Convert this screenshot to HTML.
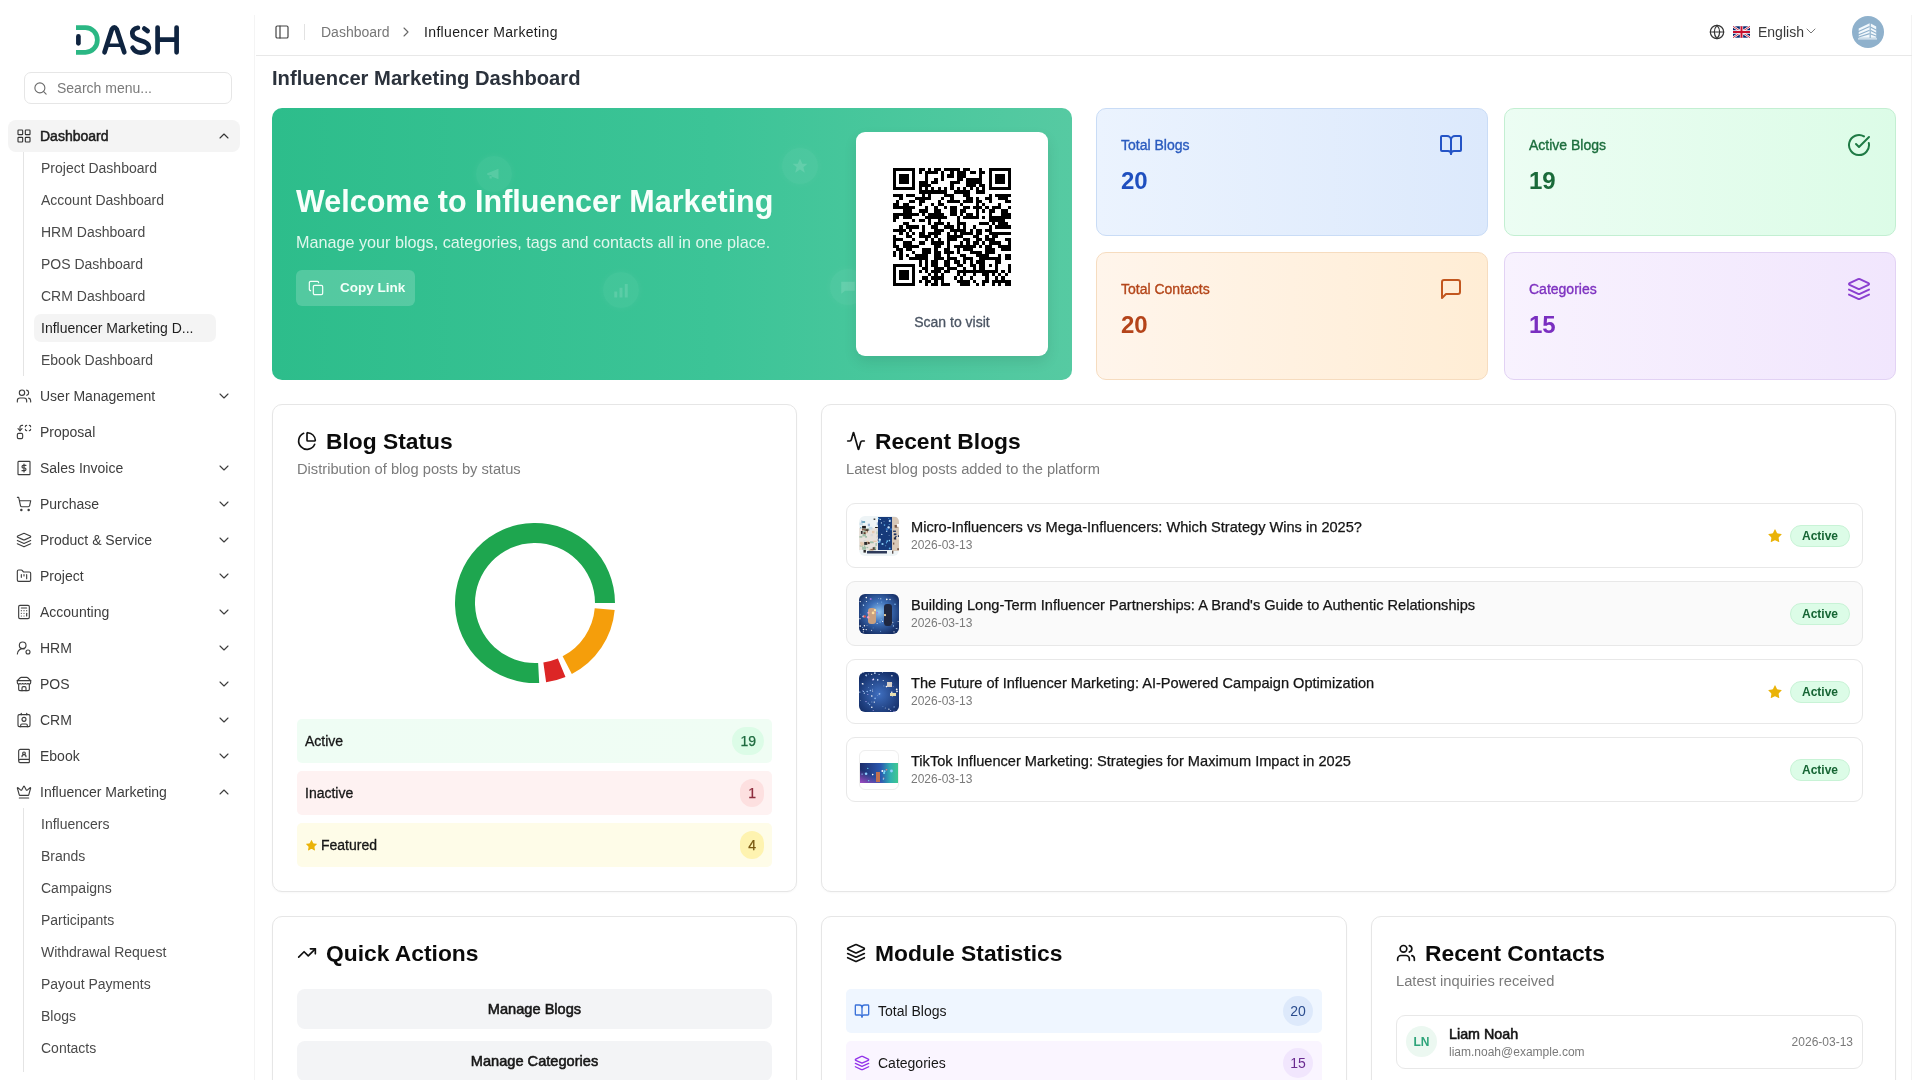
<!DOCTYPE html>
<html><head><meta charset="utf-8">
<style>
*{box-sizing:border-box;margin:0;padding:0}
html,body{width:1920px;height:1080px;overflow:hidden;background:#fff}
body{font-family:"Liberation Sans",sans-serif;color:#111;position:relative}
#root{position:absolute;left:0;top:0;width:1920px;height:1080px;background:#fff;will-change:transform;overflow:hidden}
.abs{position:absolute}
svg.i{fill:none;stroke:currentColor;stroke-width:2;stroke-linecap:round;stroke-linejoin:round;position:absolute}
/* sidebar */
#sb{position:absolute;left:0;top:0;width:256px;height:1080px;background:#fff}
.sbline{position:absolute;left:254px;top:15px;width:1px;height:1065px;background:#f4f4f4}
.search{position:absolute;left:24px;top:72px;width:208px;height:32px;border:1px solid #e6e6e6;border-radius:7px}
.search span{position:absolute;left:32px;top:0;line-height:30px;font-size:14px;color:#7a7a7a}
.nav{position:absolute;left:0;width:256px;height:32px;font-size:14px;color:#3d3d3d}
.nav .t{position:absolute;left:40px;top:0;line-height:32px;white-space:nowrap}
.nav svg.i{left:16px;top:8px;width:16px;height:16px;stroke-width:1.7}
.nav svg.ch{left:216px;top:8px;width:16px;height:16px;stroke-width:1.6}
.sub{position:absolute;left:0;width:256px;height:32px;font-size:14px;color:#4a4a4a}
.sub .t{position:absolute;left:41px;top:0;line-height:32px;white-space:nowrap}
.vline{position:absolute;left:23px;width:1px;background:#e4e4e4}
/* header */
#hd{position:absolute;left:256px;top:0;width:1656px;height:56px;border-bottom:1px solid #e8e8e8}
.mainline{position:absolute;left:1911px;top:15px;width:1px;height:1065px;background:#f3f3f3}
/* cards */
.card{position:absolute;border:1px solid #e6e6e6;border-radius:10px;background:#fff;box-shadow:0 1px 2px rgba(0,0,0,0.03)}
.ctitle{position:absolute;left:53px;font-size:22.8px;font-weight:700;color:#0b0b0b;white-space:nowrap;line-height:28px}
.csub{position:absolute;left:24px;font-size:14.7px;color:#7b7b7b;white-space:nowrap;line-height:18px}
.card svg.ci{left:24px;width:20px;height:20px;stroke-width:2;color:#111}
.stat{position:absolute;width:392px;height:128px;border-radius:10px;border:1px solid}
.stat .lb{position:absolute;left:24px;top:27px;font-size:14px;line-height:18px;white-space:nowrap;-webkit-text-stroke:0.35px currentColor}
.stat .num{position:absolute;left:24px;top:58px;font-size:24px;font-weight:700;line-height:28px}
.stat svg.i{left:342px;top:24px;width:24px;height:24px;stroke-width:2}
.srow{position:absolute;left:24px;width:475px;height:44px;border-radius:5px}
.srow .t{position:absolute;left:8px;top:0;line-height:44px;font-size:14px;color:#161616;-webkit-text-stroke:0.3px #161616}
.srow .b{position:absolute;right:8px;top:8px;padding:0 8px;height:28px;border-radius:14px;text-align:center;line-height:28px;font-size:14px;-webkit-text-stroke:0.25px currentColor}
.item{position:absolute;left:24px;width:1017px;height:65px;border:1px solid #e8e8e8;border-radius:9px;background:#fff}
.item .th{position:absolute;left:12px;top:12px;width:40px;height:40px;border-radius:6px;overflow:hidden}
.item .th svg{display:block}
.item .tt{position:absolute;left:64px;top:14px;font-size:14.6px;line-height:18px;color:#141414;white-space:nowrap;-webkit-text-stroke:0.25px #141414}
.item .dt{position:absolute;left:64px;top:33px;font-size:12px;line-height:16px;color:#7a7a7a}
.badge{position:absolute;right:12px;top:21px;width:60px;height:22px;border-radius:11px;background:#dcfce7;border:1px solid #c8f3d6;color:#166534;font-size:12px;font-weight:700;text-align:center;line-height:20px}
.star{position:absolute;right:79px;top:24px;width:16px;height:16px}
.qbtn{position:absolute;left:24px;width:475px;height:40px;border-radius:8px;background:#f3f4f6;text-align:center;line-height:40px;font-size:14.6px;color:#161616;-webkit-text-stroke:0.55px #161616}
.mrow{position:absolute;left:24px;width:476px;height:44px;border-radius:5px}
.mrow .t{position:absolute;left:32px;top:0;line-height:44px;font-size:14px;color:#161616}
.mrow svg.i{left:8px;top:14px;width:16px;height:16px;stroke-width:2}
.mrow .b{position:absolute;right:9px;top:7px;width:30px;height:30px;border-radius:15px;text-align:center;line-height:30px;font-size:14px}
</style></head>
<body>
<div id="root">
<!-- SIDEBAR -->
<div id="sb">
  <svg class="abs" style="left:0;top:0" width="256" height="70" viewBox="0 0 256 70">
    <g fill="none" stroke-linecap="round" stroke-linejoin="round" stroke-width="4.7">
      <path d="M76 27.6H85.5A11.85 12.35 0 0 1 97.35 39.95A11.85 12.35 0 0 1 85.5 52.3H76" stroke="#2bb784" stroke-linecap="butt"/>
      <path d="M78.4 36.4V43.3" stroke="#0f2440"/>
      <path d="M104.5 52.3L111.9 29.2Q114.3 25.6 116.7 29.2L124.3 52.3" stroke="#0f2440"/>
      <path d="M108.6 45.2H120.2" stroke="#0f2440" stroke-width="3.4"/>
      <path d="M137.9 27.8C134.2 28.4 132.3 30.6 132.3 33.6C132.3 37.4 135.5 39.2 140.5 40.6C145.5 42 148.9 43.5 148.9 47.2C148.9 50.8 145.5 52.6 140.8 52.6C136.8 52.6 134.2 50.6 132.6 47.8M144.3 28.6L147.6 31" stroke="#0f2440"/>
      <path d="M157.6 27.6V52.3M176.6 27.6V52.3M157.6 39.6H176.6" stroke="#0f2440"/>
    </g>
  </svg>
  <div class="search">
    <svg class="i" style="left:8px;top:8px;width:15px;height:15px;color:#6b6b6b;stroke-width:1.8" viewBox="0 0 24 24"><circle cx="11" cy="11" r="8"/><path d="m21 21-4.3-4.3"/></svg>
    <span>Search menu...</span>
  </div>
  <!-- Dashboard -->
  <div class="abs" style="left:8px;top:120px;width:232px;height:32px;background:#f4f4f4;border-radius:8px"></div>
  <div class="nav" style="top:120px">
    <svg class="i" viewBox="0 0 24 24" style="color:#333"><rect width="7" height="7" x="3" y="3" rx="1"/><rect width="7" height="7" x="14" y="3" rx="1"/><rect width="7" height="7" x="14" y="14" rx="1"/><rect width="7" height="7" x="3" y="14" rx="1"/></svg>
    <span class="t" style="color:#1d1d1d;-webkit-text-stroke:0.5px #1d1d1d">Dashboard</span>
    <svg class="i ch" viewBox="0 0 24 24" style="color:#333"><path d="m18 15-6-6-6 6"/></svg>
  </div>
  <div class="vline" style="top:152px;height:224px"></div>
  <div class="sub" style="top:152px"><span class="t">Project Dashboard</span></div>
  <div class="sub" style="top:184px"><span class="t">Account Dashboard</span></div>
  <div class="sub" style="top:216px"><span class="t">HRM Dashboard</span></div>
  <div class="sub" style="top:248px"><span class="t">POS Dashboard</span></div>
  <div class="sub" style="top:280px"><span class="t">CRM Dashboard</span></div>
  <div class="abs" style="left:34px;top:314px;width:182px;height:28px;background:#f4f4f4;border-radius:7px"></div>
  <div class="sub" style="top:312px"><span class="t" style="color:#1f1f1f">Influencer Marketing D...</span></div>
  <div class="sub" style="top:344px"><span class="t">Ebook Dashboard</span></div>

  <div class="nav" style="top:380px"><svg class="i" viewBox="0 0 24 24"><path d="M16 21v-2a4 4 0 0 0-4-4H6a4 4 0 0 0-4 4v2"/><circle cx="9" cy="7" r="4"/><path d="M22 21v-2a4 4 0 0 0-3-3.87"/><path d="M16 3.13a4 4 0 0 1 0 7.75"/></svg><span class="t">User Management</span><svg class="i ch" viewBox="0 0 24 24"><path d="m6 9 6 6 6-6"/></svg></div>
  <div class="nav" style="top:416px"><svg class="i" viewBox="0 0 24 24"><path d="M14 4a2 2 0 0 1 2-2"/><path d="M16 10a2 2 0 0 1-2-2"/><path d="M20 2a2 2 0 0 1 2 2"/><path d="M22 8a2 2 0 0 1-2 2"/><path d="m3 7 3 3 3-3"/><path d="M6 10V5a3 3 0 0 1 3-3h1"/><rect x="2" y="14" width="8" height="8" rx="2"/></svg><span class="t">Proposal</span></div>
  <div class="nav" style="top:452px"><svg class="i" viewBox="0 0 24 24"><rect x="3" y="2" width="18" height="20" rx="1"/><path d="M15 8h-4a2 2 0 0 0 0 4h2a2 2 0 0 1 0 4H9"/><path d="M12 6v12"/></svg><span class="t">Sales Invoice</span><svg class="i ch" viewBox="0 0 24 24"><path d="m6 9 6 6 6-6"/></svg></div>
  <div class="nav" style="top:488px"><svg class="i" viewBox="0 0 24 24"><circle cx="8" cy="21" r="1"/><circle cx="19" cy="21" r="1"/><path d="M2.05 2.05h2l2.66 12.42a2 2 0 0 0 2 1.58h9.78a2 2 0 0 0 1.95-1.57l1.65-7.43H5.12"/></svg><span class="t">Purchase</span><svg class="i ch" viewBox="0 0 24 24"><path d="m6 9 6 6 6-6"/></svg></div>
  <div class="nav" style="top:524px"><svg class="i" viewBox="0 0 24 24"><path d="m12.83 2.18a2 2 0 0 0-1.66 0L2.6 6.08a1 1 0 0 0 0 1.83l8.58 3.91a2 2 0 0 0 1.66 0l8.58-3.9a1 1 0 0 0 0-1.83Z"/><path d="m22 17.65-9.17 4.16a2 2 0 0 1-1.66 0L2 17.65"/><path d="m22 12.65-9.17 4.16a2 2 0 0 1-1.66 0L2 12.65"/></svg><span class="t">Product &amp; Service</span><svg class="i ch" viewBox="0 0 24 24"><path d="m6 9 6 6 6-6"/></svg></div>
  <div class="nav" style="top:560px"><svg class="i" viewBox="0 0 24 24"><path d="M4 20h16a2 2 0 0 0 2-2V8a2 2 0 0 0-2-2h-7.93a2 2 0 0 1-1.66-.9l-.82-1.2A2 2 0 0 0 7.93 3H4a2 2 0 0 0-2 2v13c0 1.1.9 2 2 2Z"/><path d="M8 10v4"/><path d="M12 10v2"/><path d="M16 10v6"/></svg><span class="t">Project</span><svg class="i ch" viewBox="0 0 24 24"><path d="m6 9 6 6 6-6"/></svg></div>
  <div class="nav" style="top:596px"><svg class="i" viewBox="0 0 24 24"><rect width="16" height="20" x="4" y="2" rx="2"/><path d="M8 6h8"/><path d="M16 14v4"/><path d="M16 10h.01"/><path d="M12 10h.01"/><path d="M8 10h.01"/><path d="M12 14h.01"/><path d="M8 14h.01"/><path d="M12 18h.01"/><path d="M8 18h.01"/></svg><span class="t">Accounting</span><svg class="i ch" viewBox="0 0 24 24"><path d="m6 9 6 6 6-6"/></svg></div>
  <div class="nav" style="top:632px"><svg class="i" viewBox="0 0 24 24"><path d="M2 21a8 8 0 0 1 10.43-7.62"/><circle cx="10" cy="8" r="5"/><circle cx="18" cy="18" r="3"/></svg><span class="t">HRM</span><svg class="i ch" viewBox="0 0 24 24"><path d="m6 9 6 6 6-6"/></svg></div>
  <div class="nav" style="top:668px"><svg class="i" viewBox="0 0 24 24"><path d="m2 7 4.41-4.41A2 2 0 0 1 7.83 2h8.34a2 2 0 0 1 1.42.59L22 7"/><path d="M4 12v8a2 2 0 0 0 2 2h12a2 2 0 0 0 2-2v-8"/><path d="M15 22v-4a2 2 0 0 0-2-2h-2a2 2 0 0 0-2 2v4"/><path d="M2 7h20"/><path d="M22 7v3a2 2 0 0 1-2 2a2.7 2.7 0 0 1-1.59-.63.7.7 0 0 0-.82 0A2.7 2.7 0 0 1 16 12a2.7 2.7 0 0 1-1.59-.63.7.7 0 0 0-.82 0A2.7 2.7 0 0 1 12 12a2.7 2.7 0 0 1-1.59-.63.7.7 0 0 0-.82 0A2.7 2.7 0 0 1 8 12a2.7 2.7 0 0 1-1.59-.63.7.7 0 0 0-.82 0A2.7 2.7 0 0 1 4 12a2 2 0 0 1-2-2V7"/></svg><span class="t">POS</span><svg class="i ch" viewBox="0 0 24 24"><path d="m6 9 6 6 6-6"/></svg></div>
  <div class="nav" style="top:704px"><svg class="i" viewBox="0 0 24 24"><path d="M16 2v2"/><path d="M7 22v-2a2 2 0 0 1 2-2h6a2 2 0 0 1 2 2v2"/><path d="M8 2v2"/><circle cx="12" cy="11" r="3"/><rect x="3" y="4" width="18" height="18" rx="2"/></svg><span class="t">CRM</span><svg class="i ch" viewBox="0 0 24 24"><path d="m6 9 6 6 6-6"/></svg></div>
  <div class="nav" style="top:740px"><svg class="i" viewBox="0 0 24 24"><path d="M15 13a3 3 0 1 0-6 0"/><path d="M4 19.5v-15A2.5 2.5 0 0 1 6.5 2H19a1 1 0 0 1 1 1v18a1 1 0 0 1-1 1H6.5a1 1 0 0 1 0-5H20"/><circle cx="12" cy="8" r="2"/></svg><span class="t">Ebook</span><svg class="i ch" viewBox="0 0 24 24"><path d="m6 9 6 6 6-6"/></svg></div>
  <div class="nav" style="top:776px"><svg class="i" viewBox="0 0 24 24"><path d="M11.562 3.266a.5.5 0 0 1 .876 0L15.39 8.87a1 1 0 0 0 1.516.294L21.183 5.5a.5.5 0 0 1 .798.519l-2.834 10.246a1 1 0 0 1-.956.734H5.81a1 1 0 0 1-.957-.734L2.02 6.02a.5.5 0 0 1 .798-.519l4.276 3.664a1 1 0 0 0 1.516-.294z"/><path d="M5 21h14"/></svg><span class="t">Influencer Marketing</span><svg class="i ch" viewBox="0 0 24 24"><path d="m18 15-6-6-6 6"/></svg></div>
  <div class="vline" style="top:808px;height:264px"></div>
  <div class="sub" style="top:808px"><span class="t">Influencers</span></div>
  <div class="sub" style="top:840px"><span class="t">Brands</span></div>
  <div class="sub" style="top:872px"><span class="t">Campaigns</span></div>
  <div class="sub" style="top:904px"><span class="t">Participants</span></div>
  <div class="sub" style="top:936px"><span class="t">Withdrawal Request</span></div>
  <div class="sub" style="top:968px"><span class="t">Payout Payments</span></div>
  <div class="sub" style="top:1000px"><span class="t">Blogs</span></div>
  <div class="sub" style="top:1032px"><span class="t">Contacts</span></div>
</div>
<div class="sbline"></div>
<div class="mainline"></div>

<!-- HEADER -->
<div id="hd">
  <svg class="i" viewBox="0 0 24 24" style="left:18px;top:24px;width:16px;height:16px;color:#444;stroke-width:1.8"><rect width="18" height="18" x="3" y="3" rx="2"/><path d="M9 3v18"/></svg>
  <div class="abs" style="left:48px;top:24px;width:1px;height:16px;background:#e2e2e2"></div>
  <span class="abs" style="left:65px;top:23px;font-size:14px;line-height:18px;color:#777">Dashboard</span>
  <svg class="i" viewBox="0 0 24 24" style="left:142px;top:24px;width:16px;height:16px;color:#666;stroke-width:1.6"><path d="m9 18 6-6-6-6"/></svg>
  <span class="abs" style="left:168px;top:23px;font-size:14px;line-height:18px;color:#1c1c1c;letter-spacing:0.35px">Influencer Marketing</span>

  <svg class="i" viewBox="0 0 24 24" style="left:1453px;top:24px;width:16px;height:16px;color:#333;stroke-width:1.8"><circle cx="12" cy="12" r="10"/><path d="M12 2a14.5 14.5 0 0 0 0 20 14.5 14.5 0 0 0 0-20"/><path d="M2 12h20"/></svg>
  <svg class="abs" style="left:1477px;top:26px" width="17" height="12" viewBox="0 0 60 40">
    <rect width="60" height="40" fill="#012169"/>
    <path d="M0 0L60 40M60 0L0 40" stroke="#fff" stroke-width="8"/>
    <path d="M0 0L60 40M60 0L0 40" stroke="#C8102E" stroke-width="3"/>
    <path d="M30 0V40M0 20H60" stroke="#fff" stroke-width="12"/>
    <path d="M30 0V40M0 20H60" stroke="#C8102E" stroke-width="7"/>
  </svg>
  <span class="abs" style="left:1502px;top:23px;font-size:14px;line-height:18px;color:#3a3a3a">English</span>
  <svg class="i" viewBox="0 0 24 24" style="left:1547px;top:23px;width:16px;height:16px;color:#777;stroke-width:1.5"><path d="m6 9 6 6 6-6"/></svg>
  <div class="abs" style="left:1596px;top:16px;width:32px;height:32px;border-radius:16px;background:#8fb1cc;overflow:hidden">
    <svg class="abs" style="left:0;top:0" width="32" height="32" viewBox="0 0 32 32"><g fill="#f2f8fc"><path d="M6.7 12.6L17.6 7.2V21.8H6.7z"/><path d="M18.8 7.4L24.2 10.6V21.8H18.8z"/><rect x="6" y="22.4" width="19" height="1"/></g><g stroke="#8fb1cc" stroke-width="1.1" fill="none"><path d="M6 15.8L17.6 10.6M6 18.9L17.6 14.2M6 21.2L17.6 17.6M18.8 11.2L24.6 14.2M18.8 14.6L24.6 17.4M18.8 18L24.6 20.2"/></g></svg>
  </div>
</div>

<!-- PAGE TITLE -->
<div class="abs" style="left:272px;top:66px;font-size:20.2px;font-weight:700;line-height:24px;color:#2b323c;white-space:nowrap">Influencer Marketing Dashboard</div>

<!-- BANNER -->
<div class="abs" style="left:272px;top:108px;width:800px;height:272px;border-radius:10px;background:linear-gradient(90deg,#2dbd8b 0%,#3cc497 55%,#56caa2 100%);overflow:hidden">
  <div class="abs" style="left:204px;top:48px;width:36px;height:36px;border-radius:18px;background:rgba(255,255,255,0.05);box-shadow:0 0 8px rgba(255,255,255,0.05)"><svg class="abs" style="left:9px;top:9px" width="18" height="18" viewBox="0 0 24 24"><path d="M3 11l15-6v14l-15-6z M6 13v5h3v-4" fill="rgba(255,255,255,0.13)"/></svg></div>
  <div class="abs" style="left:510px;top:40px;width:36px;height:36px;border-radius:18px;background:rgba(255,255,255,0.05);box-shadow:0 0 8px rgba(255,255,255,0.05)"><svg class="abs" style="left:9px;top:9px" width="18" height="18" viewBox="0 0 24 24"><path d="M12 2l3 7h7l-5.5 4.5 2 7.5-6.5-4.5-6.5 4.5 2-7.5L2 9h7z" fill="rgba(255,255,255,0.13)"/></svg></div>
  <div class="abs" style="left:331px;top:164px;width:36px;height:36px;border-radius:18px;background:rgba(255,255,255,0.05);box-shadow:0 0 8px rgba(255,255,255,0.05)"><svg class="abs" style="left:9px;top:9px" width="18" height="18" viewBox="0 0 24 24"><path d="M3 14h4v8H3zM10 9h4v13h-4zM17 4h4v18h-4z" fill="rgba(255,255,255,0.13)"/></svg></div>
  <div class="abs" style="left:558px;top:161px;width:36px;height:36px;border-radius:18px;background:rgba(255,255,255,0.05);box-shadow:0 0 8px rgba(255,255,255,0.05)"><svg class="abs" style="left:9px;top:9px" width="18" height="18" viewBox="0 0 24 24"><path d="M3 5h18v12H8l-5 4z" fill="rgba(255,255,255,0.13)"/></svg></div>
  <div class="abs" style="left:24px;top:75px;font-size:30.5px;font-weight:700;line-height:36px;color:#f7fffb;white-space:nowrap">Welcome to Influencer Marketing</div>
  <div class="abs" style="left:24px;top:124px;font-size:16.2px;line-height:20px;color:#e0f7ed;white-space:nowrap">Manage your blogs, categories, tags and contacts all in one place.</div>
  <div class="abs" style="left:24px;top:162px;width:119px;height:36px;border-radius:6px;background:rgba(255,255,255,0.18)">
    <svg class="i" viewBox="0 0 24 24" style="left:12px;top:10px;width:16px;height:16px;color:#f3fff9;stroke-width:1.8"><rect width="14" height="14" x="8" y="8" rx="2"/><path d="M4 16c-1.1 0-2-.9-2-2V4c0-1.1.9-2 2-2h10c1.1 0 2 .9 2 2"/></svg>
    <span class="abs" style="left:44px;top:9px;font-size:13.5px;font-weight:700;line-height:18px;color:#f3fff9">Copy Link</span>
  </div>
  <div class="abs" style="left:584px;top:24px;width:192px;height:224px;border-radius:9px;background:#fff;box-shadow:0 6px 14px rgba(0,0,0,0.09)">
    <svg class="abs" style="left:37px;top:36px" width="118" height="118" viewBox="0 0 37 37" shape-rendering="crispEdges"><path d="M0 0h7v1h-7zM8 0h2v1h-2zM11 0h1v1h-1zM13 0h2v1h-2zM16 0h5v1h-5zM22 0h2v1h-2zM27 0h1v1h-1zM30 0h7v1h-7zM0 1h1v1h-1zM6 1h1v1h-1zM8 1h1v1h-1zM10 1h4v1h-4zM15 1h1v1h-1zM18 1h1v1h-1zM20 1h3v1h-3zM24 1h2v1h-2zM27 1h2v1h-2zM30 1h1v1h-1zM36 1h1v1h-1zM0 2h1v1h-1zM2 2h3v1h-3zM6 2h1v1h-1zM10 2h1v1h-1zM15 2h1v1h-1zM17 2h2v1h-2zM20 2h3v1h-3zM27 2h1v1h-1zM30 2h1v1h-1zM32 2h3v1h-3zM36 2h1v1h-1zM0 3h1v1h-1zM2 3h3v1h-3zM6 3h1v1h-1zM10 3h1v1h-1zM13 3h1v1h-1zM15 3h1v1h-1zM20 3h2v1h-2zM23 3h5v1h-5zM30 3h1v1h-1zM32 3h3v1h-3zM36 3h1v1h-1zM0 4h1v1h-1zM2 4h3v1h-3zM6 4h1v1h-1zM8 4h3v1h-3zM12 4h2v1h-2zM18 4h3v1h-3zM23 4h5v1h-5zM30 4h1v1h-1zM32 4h3v1h-3zM36 4h1v1h-1zM0 5h1v1h-1zM6 5h1v1h-1zM8 5h4v1h-4zM18 5h1v1h-1zM23 5h3v1h-3zM27 5h2v1h-2zM30 5h1v1h-1zM36 5h1v1h-1zM0 6h7v1h-7zM8 6h1v1h-1zM10 6h1v1h-1zM12 6h1v1h-1zM14 6h1v1h-1zM16 6h1v1h-1zM18 6h1v1h-1zM20 6h1v1h-1zM22 6h1v1h-1zM24 6h1v1h-1zM26 6h1v1h-1zM28 6h1v1h-1zM30 6h7v1h-7zM8 7h9v1h-9zM19 7h5v1h-5zM26 7h3v1h-3zM0 8h3v1h-3zM4 8h3v1h-3zM9 8h1v1h-1zM11 8h1v1h-1zM16 8h3v1h-3zM22 8h2v1h-2zM30 8h1v1h-1zM32 8h5v1h-5zM2 9h1v1h-1zM7 9h5v1h-5zM15 9h1v1h-1zM18 9h1v1h-1zM23 9h2v1h-2zM26 9h1v1h-1zM29 9h2v1h-2zM33 9h3v1h-3zM1 10h1v1h-1zM5 10h2v1h-2zM8 10h2v1h-2zM14 10h1v1h-1zM17 10h4v1h-4zM22 10h3v1h-3zM26 10h2v1h-2zM30 10h1v1h-1zM35 10h2v1h-2zM0 11h2v1h-2zM3 11h2v1h-2zM8 11h1v1h-1zM12 11h1v1h-1zM14 11h2v1h-2zM21 11h1v1h-1zM26 11h1v1h-1zM28 11h1v1h-1zM33 11h1v1h-1zM0 12h7v1h-7zM10 12h1v1h-1zM13 12h1v1h-1zM16 12h1v1h-1zM18 12h2v1h-2zM22 12h2v1h-2zM25 12h3v1h-3zM29 12h1v1h-1zM31 12h3v1h-3zM36 12h1v1h-1zM3 13h3v1h-3zM8 13h3v1h-3zM13 13h2v1h-2zM18 13h2v1h-2zM21 13h2v1h-2zM26 13h1v1h-1zM28 13h1v1h-1zM30 13h2v1h-2zM34 13h2v1h-2zM0 14h8v1h-8zM9 14h1v1h-1zM11 14h5v1h-5zM18 14h2v1h-2zM21 14h1v1h-1zM23 14h2v1h-2zM26 14h1v1h-1zM30 14h1v1h-1zM34 14h3v1h-3zM0 15h2v1h-2zM3 15h3v1h-3zM10 15h7v1h-7zM20 15h1v1h-1zM22 15h5v1h-5zM28 15h1v1h-1zM30 15h7v1h-7zM0 16h1v1h-1zM6 16h1v1h-1zM8 16h2v1h-2zM11 16h1v1h-1zM14 16h1v1h-1zM20 16h1v1h-1zM30 16h5v1h-5zM3 17h2v1h-2zM11 17h1v1h-1zM13 17h3v1h-3zM17 17h1v1h-1zM20 17h3v1h-3zM27 17h3v1h-3zM31 17h1v1h-1zM33 17h3v1h-3zM2 18h1v1h-1zM4 18h4v1h-4zM9 18h1v1h-1zM12 18h2v1h-2zM16 18h3v1h-3zM20 18h1v1h-1zM22 18h1v1h-1zM25 18h1v1h-1zM30 18h1v1h-1zM32 18h5v1h-5zM0 19h4v1h-4zM5 19h1v1h-1zM9 19h1v1h-1zM13 19h3v1h-3zM18 19h5v1h-5zM24 19h1v1h-1zM26 19h2v1h-2zM29 19h2v1h-2zM2 20h1v1h-1zM4 20h1v1h-1zM6 20h1v1h-1zM8 20h2v1h-2zM11 20h4v1h-4zM17 20h1v1h-1zM19 20h1v1h-1zM21 20h4v1h-4zM26 20h2v1h-2zM30 20h7v1h-7zM0 21h1v1h-1zM4 21h2v1h-2zM8 21h4v1h-4zM13 21h1v1h-1zM17 21h5v1h-5zM25 21h2v1h-2zM29 21h1v1h-1zM31 21h2v1h-2zM0 22h3v1h-3zM6 22h1v1h-1zM10 22h1v1h-1zM12 22h1v1h-1zM14 22h1v1h-1zM17 22h3v1h-3zM22 22h2v1h-2zM26 22h2v1h-2zM29 22h3v1h-3zM35 22h2v1h-2zM0 23h1v1h-1zM3 23h3v1h-3zM8 23h2v1h-2zM12 23h4v1h-4zM17 23h1v1h-1zM21 23h1v1h-1zM23 23h1v1h-1zM25 23h2v1h-2zM28 23h1v1h-1zM30 23h4v1h-4zM36 23h1v1h-1zM0 24h2v1h-2zM3 24h5v1h-5zM13 24h2v1h-2zM17 24h1v1h-1zM19 24h7v1h-7zM27 24h1v1h-1zM29 24h2v1h-2zM33 24h4v1h-4zM1 25h2v1h-2zM4 25h2v1h-2zM9 25h3v1h-3zM13 25h1v1h-1zM16 25h2v1h-2zM20 25h1v1h-1zM22 25h3v1h-3zM29 25h3v1h-3zM34 25h3v1h-3zM0 26h1v1h-1zM2 26h1v1h-1zM6 26h1v1h-1zM9 26h3v1h-3zM13 26h2v1h-2zM16 26h3v1h-3zM20 26h1v1h-1zM24 26h4v1h-4zM29 26h3v1h-3zM0 27h1v1h-1zM2 27h1v1h-1zM4 27h1v1h-1zM7 27h4v1h-4zM13 27h2v1h-2zM17 27h1v1h-1zM21 27h2v1h-2zM26 27h4v1h-4zM33 27h1v1h-1zM35 27h2v1h-2zM2 28h1v1h-1zM5 28h6v1h-6zM13 28h3v1h-3zM17 28h3v1h-3zM22 28h3v1h-3zM27 28h7v1h-7zM35 28h2v1h-2zM8 29h1v1h-1zM10 29h1v1h-1zM12 29h2v1h-2zM16 29h2v1h-2zM19 29h2v1h-2zM22 29h1v1h-1zM24 29h1v1h-1zM26 29h3v1h-3zM32 29h2v1h-2zM0 30h7v1h-7zM8 30h1v1h-1zM10 30h1v1h-1zM12 30h2v1h-2zM16 30h2v1h-2zM20 30h2v1h-2zM24 30h2v1h-2zM27 30h2v1h-2zM30 30h1v1h-1zM32 30h1v1h-1zM36 30h1v1h-1zM0 31h1v1h-1zM6 31h1v1h-1zM9 31h2v1h-2zM13 31h3v1h-3zM17 31h3v1h-3zM22 31h1v1h-1zM25 31h1v1h-1zM27 31h2v1h-2zM32 31h1v1h-1zM36 31h1v1h-1zM0 32h1v1h-1zM2 32h3v1h-3zM6 32h1v1h-1zM8 32h1v1h-1zM10 32h1v1h-1zM12 32h3v1h-3zM16 32h2v1h-2zM20 32h13v1h-13zM34 32h1v1h-1zM36 32h1v1h-1zM0 33h1v1h-1zM2 33h3v1h-3zM6 33h1v1h-1zM11 33h1v1h-1zM13 33h1v1h-1zM15 33h1v1h-1zM20 33h1v1h-1zM22 33h1v1h-1zM25 33h1v1h-1zM28 33h2v1h-2zM31 33h1v1h-1zM33 33h1v1h-1zM35 33h1v1h-1zM0 34h1v1h-1zM2 34h3v1h-3zM6 34h1v1h-1zM9 34h2v1h-2zM12 34h4v1h-4zM19 34h1v1h-1zM21 34h1v1h-1zM24 34h1v1h-1zM29 34h1v1h-1zM32 34h1v1h-1zM34 34h1v1h-1zM0 35h1v1h-1zM6 35h1v1h-1zM8 35h1v1h-1zM10 35h2v1h-2zM13 35h1v1h-1zM15 35h1v1h-1zM20 35h4v1h-4zM25 35h1v1h-1zM28 35h2v1h-2zM31 35h6v1h-6zM0 36h7v1h-7zM10 36h1v1h-1zM12 36h2v1h-2zM15 36h3v1h-3zM21 36h3v1h-3zM26 36h1v1h-1zM28 36h1v1h-1zM31 36h1v1h-1zM33 36h1v1h-1zM35 36h2v1h-2z" fill="#000"/></svg>
    <div class="abs" style="left:0;top:181px;width:192px;text-align:center;font-size:14px;line-height:18px;color:#4b5563;-webkit-text-stroke:0.3px #4b5563">Scan to visit</div>
  </div>
</div>

<!-- STAT CARDS -->
<div class="stat" style="left:1096px;top:108px;background:linear-gradient(90deg,#ebf3fe,#dce9fc);border-color:#c9dcf6">
  <span class="lb" style="color:#2a5bbf">Total Blogs</span><span class="num" style="color:#1f4fbf">20</span>
  <svg class="i" viewBox="0 0 24 24" style="color:#2454c6"><path d="M12 7v14"/><path d="M3 18a1 1 0 0 1-1-1V4a1 1 0 0 1 1-1h5a4 4 0 0 1 4 4 4 4 0 0 1 4-4h5a1 1 0 0 1 1 1v13a1 1 0 0 1-1 1h-6a3 3 0 0 0-3 3 3 3 0 0 0-3-3z"/></svg>
</div>
<div class="stat" style="left:1504px;top:108px;background:linear-gradient(90deg,#ecfdf3,#dcfce7);border-color:#c3efd2">
  <span class="lb" style="color:#1c6e3d">Active Blogs</span><span class="num" style="color:#1a6b3a">19</span>
  <svg class="i" viewBox="0 0 24 24" style="color:#1f7a45"><path d="M21.801 10A10 10 0 1 1 17 3.335"/><path d="m9 11 3 3L22 4"/></svg>
</div>
<div class="stat" style="left:1096px;top:252px;background:linear-gradient(90deg,#fff5eb,#ffedd5);border-color:#f6dcbf">
  <span class="lb" style="color:#b4461a">Total Contacts</span><span class="num" style="color:#b4441a">20</span>
  <svg class="i" viewBox="0 0 24 24" style="color:#c2571f"><path d="M21 15a2 2 0 0 1-2 2H7l-4 4V5a2 2 0 0 1 2-2h14a2 2 0 0 1 2 2z"/></svg>
</div>
<div class="stat" style="left:1504px;top:252px;background:linear-gradient(90deg,#f8f2fe,#f1e6fd);border-color:#e2d2f4">
  <span class="lb" style="color:#7e32c0">Categories</span><span class="num" style="color:#7a2fc0">15</span>
  <svg class="i" viewBox="0 0 24 24" style="color:#8b3fd0"><path d="m12.83 2.18a2 2 0 0 0-1.66 0L2.6 6.08a1 1 0 0 0 0 1.83l8.58 3.91a2 2 0 0 0 1.66 0l8.58-3.9a1 1 0 0 0 0-1.83Z"/><path d="m22 17.65-9.17 4.16a2 2 0 0 1-1.66 0L2 17.65"/><path d="m22 12.65-9.17 4.16a2 2 0 0 1-1.66 0L2 12.65"/></svg>
</div>

<!-- BLOG STATUS -->
<div class="card" style="left:272px;top:404px;width:525px;height:488px">
  <svg class="i ci" viewBox="0 0 24 24" style="top:26px"><path d="M21 12c.552 0 1.005-.449.95-.998a10 10 0 0 0-8.953-8.951c-.55-.055-.998.398-.998.95v8a1 1 0 0 0 1 1z"/><path d="M21.21 15.89A10 10 0 1 1 8 2.83"/></svg>
  <div class="ctitle" style="top:22px">Blog Status</div>
  <div class="csub" style="top:55px">Distribution of blog posts by status</div>
  <svg class="abs" style="left:181px;top:117px" width="162" height="162" viewBox="-81 -81 162 162" ><path d="M4.19 79.89A80 80 0 1 1 80.00 -0.00L60.00 -0.00A60 60 0 1 0 3.14 59.92Z" fill="#1ea64f"/><path d="M30.49 73.96A80 80 0 0 1 11.13 79.22L8.35 59.42A60 60 0 0 0 22.86 55.47Z" fill="#dc2626"/><path d="M79.68 7.11A80 80 0 0 1 36.82 71.03L27.61 53.27A60 60 0 0 0 59.76 5.33Z" fill="#f59e0b"/></svg>
  <div class="srow" style="top:314px;background:linear-gradient(90deg,#effdf4,#f0fdf4)"><span class="t">Active</span><span class="b" style="background:#dcfce7;color:#1d6b3f">19</span></div>
  <div class="srow" style="top:366px;background:#fef2f2"><span class="t">Inactive</span><span class="b" style="background:#fde0e0;color:#8f2f3f">1</span></div>
  <div class="srow" style="top:418px;background:#fefce8"><svg class="abs" style="left:8px;top:16px" width="13" height="13" viewBox="0 0 24 24"><path fill="#eab308" d="M11.525 2.295a.53.53 0 0 1 .95 0l2.31 4.679a2.123 2.123 0 0 0 1.595 1.16l5.166.756a.53.53 0 0 1 .294.904l-3.736 3.638a2.123 2.123 0 0 0-.611 1.878l.882 5.14a.53.53 0 0 1-.771.56l-4.618-2.428a2.122 2.122 0 0 0-1.973 0L6.396 21.01a.53.53 0 0 1-.77-.56l.881-5.139a2.122 2.122 0 0 0-.611-1.879L2.16 9.795a.53.53 0 0 1 .294-.906l5.165-.755a2.122 2.122 0 0 0 1.597-1.16z"/></svg><span class="t" style="left:24px">Featured</span><span class="b" style="background:#fef3b0;color:#7a5a12">4</span></div>
</div>

<!-- RECENT BLOGS -->
<div class="card" style="left:821px;top:404px;width:1075px;height:488px">
  <svg class="i ci" viewBox="0 0 24 24" style="top:26px"><path d="M22 12h-2.48a2 2 0 0 0-1.93 1.46l-2.35 8.36a.25.25 0 0 1-.48 0L9.24 2.18a.25.25 0 0 0-.48 0l-2.35 8.36A2 2 0 0 1 4.49 12H2"/></svg>
  <div class="ctitle" style="top:22px">Recent Blogs</div>
  <div class="csub" style="top:55px">Latest blog posts added to the platform</div>
  <div class="item" style="top:98px">
    <div class="th"><svg width="40" height="40" viewBox="0 0 40 40"><rect width="40" height="40" fill="#eef4f6"/><rect x="0" y="12" width="20" height="22" fill="#e8e2dc"/><rect x="4.5" y="24.0" width="2.1" height="2.2" fill="#d9d9d9"/><rect x="11.0" y="25.3" width="3.7" height="1.9" fill="#9fbfa8"/><rect x="4.5" y="33.9" width="2.4" height="2.7" fill="#2b2b2b"/><rect x="7.5" y="30.9" width="1.7" height="1.3" fill="#9fbfa8"/><rect x="7.4" y="12.3" width="3.3" height="1.3" fill="#9fbfa8"/><rect x="0.8" y="29.2" width="3.5" height="1.5" fill="#9fbfa8"/><rect x="13.7" y="31.3" width="3.1" height="2.8" fill="#2b2b2b"/><rect x="13.8" y="24.7" width="3.9" height="1.3" fill="#e4c9b0"/><rect x="1.9" y="15.0" width="1.7" height="2.9" fill="#2b2b2b"/><rect x="14.8" y="30.8" width="2.3" height="2.7" fill="#9fbfa8"/><rect x="6.7" y="24.9" width="2.8" height="2.8" fill="#d9d9d9"/><rect x="17.4" y="12.6" width="1.8" height="2.2" fill="#d9d9d9"/><rect x="3.1" y="30.9" width="3.9" height="2.8" fill="#9fbfa8"/><rect x="2.0" y="26.4" width="2.9" height="3.0" fill="#e4c9b0"/><rect x="5.4" y="13.4" width="3.6" height="3.0" fill="#5a3d2e"/><rect x="6.5" y="13.5" width="3.7" height="1.0" fill="#2b2b2b"/><rect x="14.6" y="31.2" width="1.1" height="2.2" fill="#5a3d2e"/><rect x="7.2" y="24.9" width="2.7" height="2.8" fill="#e4c9b0"/><rect x="9.6" y="34.0" width="1.9" height="1.2" fill="#9fbfa8"/><rect x="10.2" y="32.9" width="3.9" height="1.6" fill="#e4c9b0"/><rect x="3.0" y="12.9" width="3.6" height="1.6" fill="#8a6a55"/><rect x="17.0" y="20.3" width="2.4" height="2.0" fill="#d9d9d9"/><rect x="16.5" y="27.0" width="1.3" height="2.9" fill="#9fbfa8"/><rect x="5.2" y="26.0" width="3.1" height="2.9" fill="#2b2b2b"/><rect x="18.6" y="23.5" width="2.6" height="1.0" fill="#2b2b2b"/><rect x="18.8" y="18.9" width="2.1" height="2.2" fill="#8a6a55"/><rect x="1.1" y="25.8" width="2.4" height="2.4" fill="#e4c9b0"/><rect x="11.6" y="18.1" width="2.5" height="2.2" fill="#d9d9d9"/><rect x="0.4" y="20.1" width="2.9" height="1.6" fill="#9fbfa8"/><rect x="6.1" y="20.0" width="1.9" height="1.7" fill="#9fbfa8"/><rect x="5.0" y="29.3" width="1.3" height="2.6" fill="#9fbfa8"/><rect x="13.0" y="14.9" width="2.5" height="2.3" fill="#e4c9b0"/><rect x="4.5" y="16.1" width="2.3" height="2.4" fill="#5a3d2e"/><rect x="11.4" y="32.9" width="3.0" height="1.4" fill="#8a6a55"/><rect x="1.5" y="28.3" width="1.7" height="2.1" fill="#e4c9b0"/><rect x="4.3" y="14.7" width="2.6" height="1.4" fill="#9fbfa8"/><rect x="3.5" y="18.1" width="3.4" height="2.3" fill="#9fbfa8"/><rect x="6.6" y="14.9" width="1.9" height="2.6" fill="#e4c9b0"/><rect x="8.8" y="26.0" width="1.9" height="2.1" fill="#5a3d2e"/><rect x="17.5" y="15.4" width="1.0" height="2.9" fill="#9fbfa8"/><rect x="17.8" y="6.3" width="3.9" height="2.9" fill="#9ab6d6"/><rect x="0.6" y="6.6" width="3.3" height="2.5" fill="#c6dce8"/><rect x="9.8" y="10.9" width="3.6" height="2.7" fill="#c6dce8"/><rect x="2.2" y="4.4" width="1.1" height="2.6" fill="#9ab6d6"/><rect x="16.1" y="11.0" width="2.7" height="1.0" fill="#1d1d1d"/><rect x="3.1" y="5.0" width="3.0" height="2.0" fill="#6fa8c0"/><rect x="1.0" y="11.1" width="1.3" height="1.3" fill="#6fa8c0"/><rect x="14.6" y="2.6" width="1.7" height="1.2" fill="#1d1d1d"/><rect x="3.1" y="9.9" width="3.8" height="2.6" fill="#1d1d1d"/><rect x="8.8" y="7.7" width="2.2" height="2.5" fill="#9ab6d6"/><rect x="19" y="1" width="14" height="33" fill="#163a7a"/><circle cx="22.8" cy="18.4" r="0.7" fill="#cfe9ff"/><circle cx="23.5" cy="28.0" r="1.1" fill="#8fd0f5"/><circle cx="19.6" cy="2.6" r="0.8" fill="#5fb0e8"/><circle cx="31.0" cy="3.8" r="0.8" fill="#2d6fc0"/><circle cx="21.2" cy="3.4" r="0.7" fill="#cfe9ff"/><circle cx="27.2" cy="12.9" r="0.6" fill="#2d6fc0"/><circle cx="25.0" cy="5.2" r="0.4" fill="#cfe9ff"/><circle cx="30.1" cy="19.7" r="0.4" fill="#cfe9ff"/><circle cx="27.5" cy="26.8" r="0.7" fill="#5fb0e8"/><circle cx="27.7" cy="15.2" r="0.7" fill="#cfe9ff"/><circle cx="29.6" cy="11.4" r="1.2" fill="#cfe9ff"/><circle cx="25.5" cy="9.1" r="0.8" fill="#5fb0e8"/><circle cx="30.2" cy="8.4" r="0.5" fill="#5fb0e8"/><circle cx="32.1" cy="13.3" r="1.1" fill="#2d6fc0"/><circle cx="20.7" cy="23.8" r="1.2" fill="#cfe9ff"/><circle cx="28.3" cy="25.2" r="0.9" fill="#5fb0e8"/><circle cx="30.4" cy="24.6" r="0.8" fill="#8fd0f5"/><circle cx="29.8" cy="2.5" r="0.5" fill="#5fb0e8"/><circle cx="28.2" cy="13.4" r="1.1" fill="#2d6fc0"/><circle cx="30.8" cy="5.0" r="1.1" fill="#cfe9ff"/><circle cx="30.7" cy="32.4" r="0.9" fill="#5fb0e8"/><circle cx="19.5" cy="26.3" r="0.8" fill="#8fd0f5"/><circle cx="20.5" cy="25.7" r="1.1" fill="#5fb0e8"/><circle cx="26.7" cy="29.7" r="0.5" fill="#5fb0e8"/><circle cx="22.4" cy="6.9" r="0.6" fill="#cfe9ff"/><rect x="33" y="1" width="7" height="34" fill="#d8c8b8"/><rect x="34.8" y="21.4" width="2.9" height="2.1" fill="#3b2a22"/><rect x="35.6" y="9.0" width="2.9" height="2.7" fill="#7a5a48"/><rect x="35.9" y="20.3" width="2.2" height="2.8" fill="#1c2f5c"/><rect x="34.1" y="14.6" width="2.8" height="1.3" fill="#1c2f5c"/><rect x="38.2" y="32.2" width="2.0" height="1.9" fill="#7a5a48"/><rect x="34.0" y="26.6" width="1.3" height="2.0" fill="#7a5a48"/><rect x="39.0" y="19.3" width="2.6" height="2.3" fill="#1c2f5c"/><rect x="37.2" y="20.9" width="3.0" height="2.8" fill="#f0e0d0"/><rect x="33.2" y="17.3" width="1.8" height="1.3" fill="#f0e0d0"/><rect x="34.7" y="17.4" width="2.7" height="1.8" fill="#1c2f5c"/><rect x="37.9" y="8.0" width="2.2" height="2.8" fill="#ffffff"/><rect x="33.2" y="34.8" width="1.1" height="2.9" fill="#3b2a22"/><rect x="8" y="35" width="20" height="2.5" fill="#2e3a5a"/></svg></div>
    <span class="tt">Micro-Influencers vs Mega-Influencers: Which Strategy Wins in 2025?</span><span class="dt">2026-03-13</span>
    <svg class="star" viewBox="0 0 24 24"><path fill="#eab308" d="M11.525 2.295a.53.53 0 0 1 .95 0l2.31 4.679a2.123 2.123 0 0 0 1.595 1.16l5.166.756a.53.53 0 0 1 .294.904l-3.736 3.638a2.123 2.123 0 0 0-.611 1.878l.882 5.14a.53.53 0 0 1-.771.56l-4.618-2.428a2.122 2.122 0 0 0-1.973 0L6.396 21.01a.53.53 0 0 1-.77-.56l.881-5.139a2.122 2.122 0 0 0-.611-1.879L2.16 9.795a.53.53 0 0 1 .294-.906l5.165-.755a2.122 2.122 0 0 0 1.597-1.16z"/></svg>
    <span class="badge">Active</span>
  </div>
  <div class="item" style="top:176px;background:#fafafa">
    <div class="th"><svg width="40" height="40" viewBox="0 0 40 40"><defs><radialGradient id="g2" cx="50%" cy="45%" r="60%"><stop offset="0" stop-color="#8ec3f0"/><stop offset=".45" stop-color="#3d6fb8"/><stop offset="1" stop-color="#162f66"/></radialGradient></defs><rect width="40" height="40" fill="url(#g2)"/><circle cx="18.7" cy="9.2" r="0.4" fill="#ffffff"/><circle cx="38.3" cy="34.2" r="0.4" fill="#bfe0ff"/><circle cx="31.0" cy="5.5" r="0.7" fill="#ffffff"/><circle cx="36.0" cy="10.2" r="0.8" fill="#7fb8f0"/><circle cx="7.3" cy="3.6" r="0.8" fill="#ffffff"/><circle cx="3.7" cy="33.4" r="0.5" fill="#7fb8f0"/><circle cx="18.1" cy="29.4" r="0.5" fill="#ffffff"/><circle cx="13.4" cy="17.4" r="0.6" fill="#bfe0ff"/><circle cx="25.8" cy="29.7" r="0.6" fill="#bfe0ff"/><circle cx="21.8" cy="4.8" r="0.5" fill="#ffffff"/><circle cx="4.5" cy="35.5" r="0.8" fill="#ffffff"/><circle cx="21.1" cy="28.0" r="0.7" fill="#7fb8f0"/><circle cx="30.3" cy="11.8" r="0.7" fill="#7fb8f0"/><circle cx="4.3" cy="37.8" r="0.5" fill="#ffffff"/><circle cx="26.7" cy="20.3" r="0.3" fill="#7fb8f0"/><circle cx="27.1" cy="22.7" r="0.4" fill="#bfe0ff"/><circle cx="7.2" cy="35.6" r="0.7" fill="#ffffff"/><circle cx="4.3" cy="22.4" r="0.9" fill="#ffffff"/><circle cx="22.2" cy="25.9" r="0.6" fill="#7fb8f0"/><circle cx="31.3" cy="28.2" r="0.4" fill="#bfe0ff"/><circle cx="30.2" cy="21.7" r="0.7" fill="#7fb8f0"/><circle cx="4.0" cy="10.8" r="0.3" fill="#bfe0ff"/><circle cx="1.7" cy="20.2" r="0.4" fill="#7fb8f0"/><circle cx="35.0" cy="37.8" r="0.6" fill="#ffffff"/><circle cx="14.1" cy="33.9" r="0.4" fill="#7fb8f0"/><circle cx="23.6" cy="27.3" r="0.6" fill="#ffffff"/><circle cx="7.4" cy="7.6" r="0.5" fill="#ffffff"/><circle cx="32.6" cy="29.9" r="0.7" fill="#bfe0ff"/><circle cx="34.4" cy="31.9" r="0.6" fill="#bfe0ff"/><circle cx="22.7" cy="8.1" r="0.5" fill="#7fb8f0"/><circle cx="1.2" cy="32.1" r="0.8" fill="#ffffff"/><circle cx="12.6" cy="36.2" r="0.5" fill="#ffffff"/><circle cx="39.1" cy="27.5" r="0.5" fill="#ffffff"/><circle cx="1.2" cy="7.6" r="0.7" fill="#ffffff"/><circle cx="30.8" cy="26.5" r="0.6" fill="#ffffff"/><circle cx="8.0" cy="31.3" r="0.4" fill="#ffffff"/><circle cx="4.5" cy="11.3" r="0.7" fill="#bfe0ff"/><circle cx="5.4" cy="31.7" r="0.7" fill="#ffffff"/><circle cx="1.0" cy="24.7" r="0.6" fill="#ffffff"/><circle cx="21.6" cy="37.2" r="0.5" fill="#7fb8f0"/><circle cx="27.8" cy="5.4" r="0.8" fill="#ffffff"/><circle cx="28.6" cy="29.6" r="0.5" fill="#bfe0ff"/><circle cx="37.3" cy="34.5" r="0.6" fill="#bfe0ff"/><circle cx="19.4" cy="4.4" r="0.3" fill="#ffffff"/><circle cx="33.8" cy="28.2" r="0.5" fill="#ffffff"/><rect x="9" y="14" width="8" height="16" rx="3" fill="#c9a080"/><rect x="25" y="10" width="8" height="22" rx="3" fill="#1f2740"/><circle cx="26.0" cy="21.1" r="1.1" fill="#ffe0a0"/><circle cx="14.1" cy="18.9" r="1.4" fill="#ffe0a0"/><circle cx="18.2" cy="18.7" r="0.8" fill="#a070e0"/><circle cx="16.0" cy="16.1" r="1.2" fill="#ffe0a0"/><circle cx="11.7" cy="5.1" r="1.0" fill="#a070e0"/><circle cx="9.3" cy="18.8" r="1.0" fill="#f0a0c0"/><circle cx="5.7" cy="22.5" r="1.2" fill="#e05050"/><circle cx="9.2" cy="23.3" r="1.2" fill="#f0a0c0"/></svg></div>
    <span class="tt">Building Long-Term Influencer Partnerships: A Brand's Guide to Authentic Relationships</span><span class="dt">2026-03-13</span>
    <span class="badge">Active</span>
  </div>
  <div class="item" style="top:254px">
    <div class="th"><svg width="40" height="40" viewBox="0 0 40 40"><defs><radialGradient id="g3" cx="50%" cy="55%" r="60%"><stop offset="0" stop-color="#3f6fc0"/><stop offset="1" stop-color="#15306a"/></radialGradient></defs><rect width="40" height="40" fill="url(#g3)"/><circle cx="2.4" cy="0.9" r="0.6" fill="#ffffff"/><circle cx="1.3" cy="28.6" r="0.4" fill="#ffffff"/><circle cx="15.9" cy="1.1" r="0.9" fill="#d0e4ff"/><circle cx="9.7" cy="15.6" r="0.4" fill="#8fbaf0"/><circle cx="24.9" cy="13.9" r="0.4" fill="#ffffff"/><circle cx="32.3" cy="11.6" r="0.9" fill="#ffffff"/><circle cx="31.6" cy="38.5" r="0.6" fill="#b0a0f0"/><circle cx="10.6" cy="32.6" r="0.7" fill="#8fbaf0"/><circle cx="12.7" cy="2.3" r="0.6" fill="#ffffff"/><circle cx="23.7" cy="0.1" r="0.3" fill="#ffffff"/><circle cx="0.8" cy="20.1" r="0.6" fill="#d0e4ff"/><circle cx="26.2" cy="36.0" r="0.4" fill="#ffffff"/><circle cx="13.6" cy="19.1" r="0.5" fill="#ffffff"/><circle cx="15.3" cy="30.1" r="0.7" fill="#ffffff"/><circle cx="3.5" cy="11.7" r="0.8" fill="#ffffff"/><circle cx="20.3" cy="21.9" r="0.6" fill="#ffffff"/><circle cx="7.0" cy="29.6" r="0.7" fill="#b0a0f0"/><circle cx="14.4" cy="7.4" r="0.8" fill="#ffffff"/><circle cx="9.2" cy="31.2" r="0.6" fill="#8fbaf0"/><circle cx="32.8" cy="20.3" r="0.8" fill="#ffffff"/><circle cx="38.0" cy="1.7" r="0.4" fill="#ffffff"/><circle cx="32.9" cy="3.7" r="0.7" fill="#ffffff"/><circle cx="12.8" cy="24.0" r="0.8" fill="#ffffff"/><circle cx="35.1" cy="34.9" r="0.6" fill="#8fbaf0"/><circle cx="39.9" cy="0.1" r="0.4" fill="#ffffff"/><circle cx="13.5" cy="12.5" r="0.6" fill="#d0e4ff"/><circle cx="9.6" cy="2.0" r="0.4" fill="#d0e4ff"/><circle cx="23.4" cy="0.5" r="0.4" fill="#d0e4ff"/><circle cx="8.8" cy="22.5" r="0.6" fill="#b0a0f0"/><circle cx="12.8" cy="35.3" r="0.8" fill="#ffffff"/><circle cx="7.1" cy="3.2" r="0.8" fill="#ffffff"/><circle cx="23.9" cy="34.4" r="0.4" fill="#8fbaf0"/><circle cx="3.4" cy="18.6" r="0.4" fill="#b0a0f0"/><circle cx="4.4" cy="19.4" r="0.7" fill="#8fbaf0"/><circle cx="16.1" cy="26.4" r="0.8" fill="#8fbaf0"/><circle cx="33.4" cy="23.8" r="0.8" fill="#d0e4ff"/><circle cx="4.7" cy="0.3" r="0.5" fill="#ffffff"/><circle cx="13.7" cy="7.7" r="0.8" fill="#b0a0f0"/><circle cx="27.5" cy="14.6" r="0.8" fill="#ffffff"/><circle cx="24.2" cy="8.6" r="0.5" fill="#ffffff"/><circle cx="13.4" cy="17.2" r="0.4" fill="#d0e4ff"/><circle cx="12.9" cy="30.0" r="0.4" fill="#d0e4ff"/><circle cx="35.0" cy="39.5" r="0.7" fill="#b0a0f0"/><circle cx="34.1" cy="14.7" r="0.4" fill="#b0a0f0"/><circle cx="38.0" cy="19.4" r="0.8" fill="#ffffff"/><circle cx="18.8" cy="23.5" r="0.3" fill="#ffffff"/><circle cx="7.4" cy="3.8" r="0.7" fill="#8fbaf0"/><circle cx="20.1" cy="2.5" r="0.6" fill="#d0e4ff"/><circle cx="29.8" cy="11.0" r="0.6" fill="#8fbaf0"/><circle cx="18.7" cy="7.9" r="0.8" fill="#d0e4ff"/><circle cx="4.1" cy="12.0" r="0.5" fill="#ffffff"/><circle cx="8.2" cy="19.5" r="0.8" fill="#8fbaf0"/><circle cx="39.1" cy="39.2" r="0.8" fill="#8fbaf0"/><circle cx="37.7" cy="17.3" r="0.9" fill="#ffffff"/><circle cx="21.0" cy="21.7" r="0.5" fill="#8fbaf0"/><circle cx="11.4" cy="18.5" r="0.8" fill="#8fbaf0"/><circle cx="29.9" cy="37.2" r="0.6" fill="#ffffff"/><circle cx="5.3" cy="21.2" r="0.6" fill="#d0e4ff"/><circle cx="38.0" cy="0.1" r="0.9" fill="#ffffff"/><circle cx="14.2" cy="38.6" r="0.5" fill="#b0a0f0"/><rect x="28" y="10" width="5" height="5" fill="#d8d0c8"/><rect x="31" y="21" width="6" height="3" fill="#e8e0b0"/></svg></div>
    <span class="tt">The Future of Influencer Marketing: AI-Powered Campaign Optimization</span><span class="dt">2026-03-13</span>
    <svg class="star" viewBox="0 0 24 24"><path fill="#eab308" d="M11.525 2.295a.53.53 0 0 1 .95 0l2.31 4.679a2.123 2.123 0 0 0 1.595 1.16l5.166.756a.53.53 0 0 1 .294.904l-3.736 3.638a2.123 2.123 0 0 0-.611 1.878l.882 5.14a.53.53 0 0 1-.771.56l-4.618-2.428a2.122 2.122 0 0 0-1.973 0L6.396 21.01a.53.53 0 0 1-.77-.56l.881-5.139a2.122 2.122 0 0 0-.611-1.879L2.16 9.795a.53.53 0 0 1 .294-.906l5.165-.755a2.122 2.122 0 0 0 1.597-1.16z"/></svg>
    <span class="badge">Active</span>
  </div>
  <div class="item" style="top:332px">
    <div class="th" style="border:1px solid #eee;background:#fff"><svg width="38" height="38" viewBox="0 0 38 38"><defs><linearGradient id="g4" x1="0" y1="0" x2="1" y2="0"><stop offset="0" stop-color="#1c2d6a"/><stop offset=".55" stop-color="#2a58b0"/><stop offset=".8" stop-color="#30b0b0"/><stop offset="1" stop-color="#40c890"/></linearGradient><linearGradient id="g4b" x1="0" y1="1" x2="1" y2="0"><stop offset="0" stop-color="#b050d0" stop-opacity=".9"/><stop offset=".35" stop-color="#b050d0" stop-opacity="0"/></linearGradient></defs><rect x="0" y="12" width="38" height="20" fill="url(#g4)"/><rect x="0" y="12" width="38" height="20" fill="url(#g4b)"/><circle cx="17.3" cy="23.1" r="1.3" fill="#70e0f0"/><circle cx="17.3" cy="28.4" r="0.8" fill="#70e0f0"/><circle cx="23.7" cy="27.3" r="0.7" fill="#f08080"/><circle cx="6.1" cy="22.7" r="1.3" fill="#8fd0ff"/><circle cx="22.4" cy="20.1" r="1.0" fill="#ffffff"/><circle cx="23.4" cy="28.0" r="0.7" fill="#8fd0ff"/><circle cx="7.8" cy="17.4" r="0.6" fill="#70e0f0"/><circle cx="12.7" cy="23.6" r="0.8" fill="#ffffff"/><circle cx="24.1" cy="22.0" r="1.1" fill="#70e0f0"/><circle cx="24.6" cy="20.3" r="1.0" fill="#8fd0ff"/><circle cx="26.5" cy="18.7" r="0.8" fill="#f08080"/><circle cx="2.1" cy="23.1" r="0.7" fill="#8fd0ff"/><circle cx="31.5" cy="20.0" r="1.4" fill="#8fd0ff"/><circle cx="8.7" cy="29.7" r="0.6" fill="#70e0f0"/><rect x="16" y="21" width="4" height="10" fill="#c07050"/></svg></div>
    <span class="tt">TikTok Influencer Marketing: Strategies for Maximum Impact in 2025</span><span class="dt">2026-03-13</span>
    <span class="badge">Active</span>
  </div>
</div>

<!-- QUICK ACTIONS -->
<div class="card" style="left:272px;top:916px;width:525px;height:200px">
  <svg class="i ci" viewBox="0 0 24 24" style="top:26px"><path d="M22 7 13.5 15.5 8.5 10.5 2 17"/><path d="M16 7h6v6"/></svg>
  <div class="ctitle" style="top:22px">Quick Actions</div>
  <div class="qbtn" style="top:72px">Manage Blogs</div>
  <div class="qbtn" style="top:124px">Manage Categories</div>
</div>

<!-- MODULE STATISTICS -->
<div class="card" style="left:821px;top:916px;width:526px;height:200px">
  <svg class="i ci" viewBox="0 0 24 24" style="top:26px"><path d="m12.83 2.18a2 2 0 0 0-1.66 0L2.6 6.08a1 1 0 0 0 0 1.83l8.58 3.91a2 2 0 0 0 1.66 0l8.58-3.9a1 1 0 0 0 0-1.83Z"/><path d="m22 17.65-9.17 4.16a2 2 0 0 1-1.66 0L2 17.65"/><path d="m22 12.65-9.17 4.16a2 2 0 0 1-1.66 0L2 12.65"/></svg>
  <div class="ctitle" style="top:22px">Module Statistics</div>
  <div class="mrow" style="top:72px;background:#eff6ff"><svg class="i" viewBox="0 0 24 24" style="color:#3b72d9"><path d="M12 7v14"/><path d="M3 18a1 1 0 0 1-1-1V4a1 1 0 0 1 1-1h5a4 4 0 0 1 4 4 4 4 0 0 1 4-4h5a1 1 0 0 1 1 1v13a1 1 0 0 1-1 1h-6a3 3 0 0 0-3 3 3 3 0 0 0-3-3z"/></svg><span class="t">Total Blogs</span><span class="b" style="background:#dde9fb;color:#2a4c8e">20</span></div>
  <div class="mrow" style="top:124px;background:#faf5ff"><svg class="i" viewBox="0 0 24 24" style="color:#9333ea"><path d="m12.83 2.18a2 2 0 0 0-1.66 0L2.6 6.08a1 1 0 0 0 0 1.83l8.58 3.91a2 2 0 0 0 1.66 0l8.58-3.9a1 1 0 0 0 0-1.83Z"/><path d="m22 17.65-9.17 4.16a2 2 0 0 1-1.66 0L2 17.65"/><path d="m22 12.65-9.17 4.16a2 2 0 0 1-1.66 0L2 12.65"/></svg><span class="t">Categories</span><span class="b" style="background:#f1e6fd;color:#6a2a90">15</span></div>
</div>

<!-- RECENT CONTACTS -->
<div class="card" style="left:1371px;top:916px;width:525px;height:200px">
  <svg class="i ci" viewBox="0 0 24 24" style="top:26px"><path d="M16 21v-2a4 4 0 0 0-4-4H6a4 4 0 0 0-4 4v2"/><circle cx="9" cy="7" r="4"/><path d="M22 21v-2a4 4 0 0 0-3-3.87"/><path d="M16 3.13a4 4 0 0 1 0 7.75"/></svg>
  <div class="ctitle" style="top:22px">Recent Contacts</div>
  <div class="csub" style="top:55px">Latest inquiries received</div>
  <div class="abs" style="left:24px;top:98px;width:467px;height:54px;border:1px solid #e8e8e8;border-radius:9px">
    <div class="abs" style="left:9px;top:10px;width:31px;height:31px;border-radius:16px;background:#ecf8f1;color:#2ea47a;font-size:12px;font-weight:700;text-align:center;line-height:32px">LN</div>
    <span class="abs" style="left:52px;top:9px;font-size:14.3px;line-height:18px;color:#141414;-webkit-text-stroke:0.55px #141414">Liam Noah</span>
    <span class="abs" style="left:52px;top:28px;font-size:12px;line-height:16px;color:#7a7a7a">liam.noah@example.com</span>
    <span class="abs" style="right:9px;top:18px;font-size:12px;line-height:16px;color:#7a7a7a">2026-03-13</span>
  </div>
</div>


</div>
</body></html>
